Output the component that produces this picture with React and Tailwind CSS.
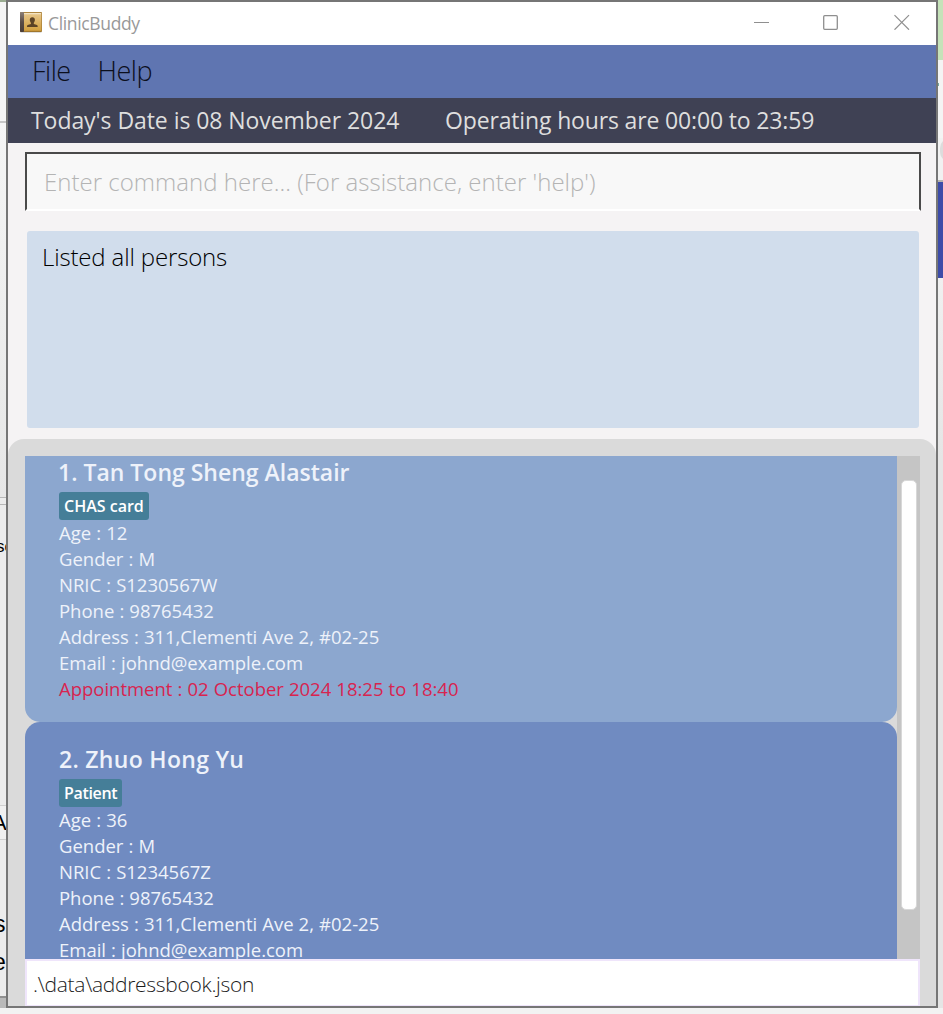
import React from "react";

const FONT = "font-['Open_Sans','Noto_Sans',sans-serif]";

function BookIcon() {
  return (
    <svg className="block h-[22px] w-[22px]" viewBox="0 0 22 22">
      <defs>
        <linearGradient id="cover" x1="0" y1="0" x2="0" y2="1">
          <stop offset="0" stopColor="#e8c88e" />
          <stop offset="1" stopColor="#d3a03f" />
        </linearGradient>
        <linearGradient id="spine" x1="0" y1="0" x2="0" y2="1">
          <stop offset="0" stopColor="#8d8078" />
          <stop offset="0.5" stopColor="#5a4c46" />
          <stop offset="1" stopColor="#4a3d38" />
        </linearGradient>
      </defs>
      <rect x="0.5" y="19" width="21" height="1.6" fill="#c9c9c9" />
      <rect x="0" y="0" width="22" height="20" rx="1" fill="#a0762c" />
      <rect x="4" y="0.8" width="17.4" height="18" fill="url(#cover)" />
      <rect x="4" y="1.2" width="17" height="1" fill="#f6ead0" />
      <rect x="0" y="0" width="4" height="20" rx="1" fill="url(#spine)" />
      <path d="M12.3 5.2c1.8 0 2.7 1.2 2.6 2.8-.1 1.3-.6 2.1-1.1 2.7v1.2l3.2 1c.5.3.7.8.7 2H7c0-1.2.2-1.700.7-2l3.200-1v-1.200c-.5-.6-1-1.400-1.100-2.700-.1-1.600.8-2.800 2.500-2.800z" fill="#5b4226" />
    </svg>
  );
}

function TitleBar() {
  return (
    <div className="flex h-[43px] shrink-0 items-center bg-white pl-3">
      <div className="-mt-[1px]"><BookIcon /></div>
      <span className="-mt-[2px] ml-[6px] text-[17.5px] leading-[24px] tracking-[-0.35px] text-[#999999]">ClinicBuddy</span>
      <svg className="-mt-[3px] ml-auto mr-[26px] block h-4 w-[158px]" viewBox="0 0 158 16" fill="none" stroke="#8f8f8f">
        <path d="M2 8.500H17" />
        <rect x="71.700" y="1.700" width="13.600" height="13.600" rx="1" strokeWidth="1.300" />
        <path d="M142.500 1.200l14.500 14.500M157 1.200l-14.500 14.500" strokeWidth="1.200" />
      </svg>
    </div>
  );
}

const ROW = "h-[26px] whitespace-nowrap text-[18.5px] leading-[26px] tracking-[-0.01px] [word-spacing:0.3px]";

function Person({ name, tag, rows, appointment, className, nameClass, tagClass }) {
  return (
    <div className={"flex shrink-0 flex-col items-start pl-[34px] text-[#eef2fa] " + className}>
      <div className={"whitespace-nowrap text-[23px] font-semibold leading-[32px] " + nameClass}>{name}</div>
      <div className={"mt-[4px] flex h-7 items-center whitespace-nowrap rounded-[3px] bg-[#457e98] pl-[5px] text-[16px] font-semibold text-white " + tagClass}>
        {tag}
      </div>
      {rows.map((row) => (
        <div key={row} className={ROW}>{row}</div>
      ))}
      {appointment && <div className={ROW + " text-[#d8244f]"}>{appointment}</div>}
    </div>
  );
}

function LeftStrip() {
  return (
    <div className="flex h-full w-[6px] shrink-0 flex-col overflow-hidden bg-[#ececec] font-['Liberation_Sans',sans-serif] text-[17px] leading-[20px] text-black">
      <div className="h-[2px] shrink-0 bg-[#9aac91]" />
      <div className="h-[119px] shrink-0 bg-[#f5f5f5]" />
      <div className="h-[2px] shrink-0 bg-[#c6c6c6]" />
      <div className="h-[374px] shrink-0 bg-gradient-to-b from-[#f5f5f5] to-[#e6e6e6]" />
      <div className="h-[8px] shrink-0 border-y border-[#b7b7b7]" />
      <div className="h-[32px] shrink-0" />
      <div className="-ml-[4px] h-[20px] shrink-0 whitespace-nowrap">so</div>
      <div className="h-[248px] shrink-0" />
      <div className="h-[35px] shrink-0 border-y border-[#d0d0d0] bg-[#f0f0f0]">
        <div className="-ml-[8px] pt-[7px] text-[22px]">A</div>
      </div>
      <div className="h-[74px] shrink-0" />
      <div className="-ml-[6px] h-[20px] shrink-0 text-[23px]">s</div>
      <div className="h-[18px] shrink-0" />
      <div className="-ml-[7px] h-[20px] shrink-0 text-[23px]">e</div>
      <div className="h-[24px] shrink-0" />
      <div className="h-[2px] shrink-0 bg-[#909090]" />
      <div className="grow bg-[#b9b9b9]" />
    </div>
  );
}

function RightStrip() {
  return (
    <div className="flex h-full w-[5px] shrink-0 flex-col overflow-hidden bg-[#e5e5e5]">
      <div className="h-[60px] shrink-0 bg-[#c5e2b9]" />
      <div className="h-[23px] shrink-0 bg-[#f4f4f4]" />
      <div className="h-[3px] shrink-0 bg-[#f4f4f4]">
        <div className="h-[3px] w-px bg-[#77aaa0]" />
      </div>
      <div className="h-[52px] shrink-0 bg-[#f4f4f4]" />
      <div className="h-[24px] shrink-0 bg-[#f1f1f1] pl-[2px]">
        <div className="h-[24px] w-[20px] rounded-full bg-[#dcdcdc]" />
      </div>
      <div className="h-[18px] shrink-0 bg-[#f1f1f1]" />
      <div className="h-[2px] shrink-0 bg-[#b3b3b3]" />
      <div className="h-[96px] shrink-0 bg-[#3d4ca8]" />
      <div className="h-[180px] shrink-0 bg-gradient-to-b from-[#f0f0f0] to-[#e5e5e5]" />
    </div>
  );
}

export default function App() {
  return (
    <div className={"flex h-[1014px] w-[943px] flex-col overflow-hidden bg-[#f2f2f2] " + FONT}>
      <div className="flex h-[1008px] shrink-0">
        <LeftStrip />
        <div className="flex h-full w-[932px] shrink-0 flex-col border-2 border-[#767676] bg-[#f5f3f4]">
          <TitleBar />
          <div className="flex h-[53px] shrink-0 items-center gap-[27px] bg-[#5f75b1] pb-px pl-6 text-[27px] font-light leading-[36px] tracking-[-0.5px] text-[#0c0f1c]">
            <span>File</span>
            <span>Help</span>
          </div>
          <div className="flex h-[45px] shrink-0 items-center bg-[#3f4154] pl-[23px] text-[23px] text-[#dedede]">
            <span className="w-[414px] whitespace-nowrap tracking-[-0.06px]">Today's Date is 08 November 2024</span>
            <span className="whitespace-nowrap tracking-[-0.15px]">Operating hours are 00:00 to 23:59</span>
          </div>
          <div className="ml-[17px] mt-[9px] flex h-[59px] w-[896px] shrink-0 items-center border-x-2 border-b-2 border-t-2 border-x-[#4a4a4a] border-b-white border-t-[#4a4a4a] bg-[#f8f8f8] pl-[17px] text-[24px] font-light tracking-[0.02px] text-[#b4b4b4]">
            Enter command here... (For assistance, enter 'help')
          </div>
          <div className="ml-[19px] mt-[20px] h-[197px] w-[892px] shrink-0 rounded-[3px] bg-[#d1ddec] pl-[15px] pt-[9px] text-[24px] font-light leading-[34px] tracking-[-0.15px] text-black">
            Listed all persons
          </div>
          <div className="mt-[11px] flex min-h-0 grow flex-col rounded-t-[16px] bg-[#dadada] pl-[17px] pr-4 pt-[17px]">
            <div className="flex h-[503px] shrink-0 overflow-hidden">
              <div className="flex w-[872px] shrink-0 flex-col overflow-hidden">
                <Person
                  className="h-[266px] rounded-b-[15px] bg-[#8ca7cf]"
                  nameClass="-ml-px tracking-[0px]"
                  tagClass="w-[90px] tracking-[0px]"
                  name="1. Tan Tong Sheng Alastair"
                  tag="CHAS card"
                  rows={["Age : 12", "Gender : M", "NRIC : S1230567W", "Phone : 98765432", "Address : 311,Clementi Ave 2, #02-25", "Email : johnd@example.com"]}
                  appointment="Appointment : 02 October 2024 18:25 to 18:40"
                />
                <Person
                  className="h-[290px] rounded-t-[15px] bg-[#708bc1] pt-[21px]"
                  nameClass="tracking-[0.3px]"
                  tagClass="w-[63px] tracking-[-0.35px]"
                  name="2. Zhuo Hong Yu"
                  tag="Patient"
                  rows={["Age : 36", "Gender : M", "NRIC : S1234567Z", "Phone : 98765432", "Address : 311,Clementi Ave 2, #02-25", "Email : johnd@example.com"]}
                />
              </div>
              <div className="w-[23px] shrink-0 bg-[#c5c5c5] pl-1 pt-6">
                <div className="h-[430px] w-4 rounded-[5px] border border-[#d8d8d8] bg-white" />
              </div>
            </div>
            <div className="flex h-[47px] w-[895px] shrink-0 items-center border-x-2 border-b border-t-2 border-[#efe5fb] bg-white pl-[6px] pt-[3px] text-[21px] font-light tracking-[-0.3px] text-[#1c1c1c]">
              .\data\addressbook.json
            </div>
          </div>
        </div>
        <RightStrip />
      </div>
    </div>
  );
}
